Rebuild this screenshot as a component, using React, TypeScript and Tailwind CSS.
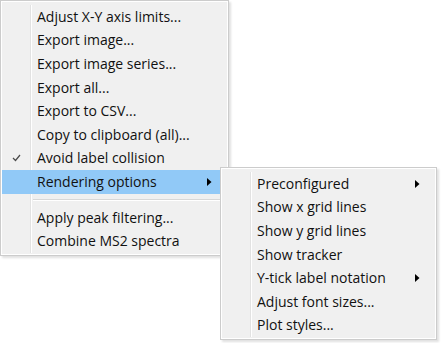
import React from 'react'

type Item = { label: string; checked?: boolean; sub?: boolean; active?: boolean } | 'sep'

const mainItems: Item[] = [
  { label: 'Adjust X-Y axis limits...' },
  { label: 'Export image...' },
  { label: 'Export image series...' },
  { label: 'Export all...' },
  { label: 'Export to CSV...' },
  { label: 'Copy to clipboard (all)...' },
  { label: 'Avoid label collision', checked: true },
  { label: 'Rendering options', sub: true, active: true },
  'sep',
  { label: 'Apply peak filtering...' },
  { label: 'Combine MS2 spectra' },
]

const renderItems: Item[] = [
  { label: 'Preconfigured', sub: true },
  { label: 'Show x grid lines' },
  { label: 'Show y grid lines' },
  { label: 'Show tracker' },
  { label: 'Y-tick label notation', sub: true },
  { label: 'Adjust font sizes...' },
  { label: 'Plot styles...' },
]

function Check() {
  return (
    <svg width="9" height="8" viewBox="0 0 9 8" fill="none" stroke="#4a4a4a" strokeWidth="1.2">
      <polyline points="1,4 3.5,6.5 8,1" />
    </svg>
  )
}

function Arrow() {
  return (
    <svg width="5" height="8" viewBox="0 0 5 8" fill="#000">
      <polygon points="0,0 4.5,4 0,8" />
    </svg>
  )
}

function MenuRow({ item }: { item: Item }) {
  if (item === 'sep') {
    return (
      <div className="flex h-[12px]">
        <div className="w-[28px] shrink-0" />
        <div className="flex-1 border-l border-[#e2e2e2] shadow-[inset_1px_0_0_#fff] pl-[2px] pt-[5px]">
          <div className="h-px bg-[#d7d7d7]" />
          <div className="h-px bg-white" />
        </div>
      </div>
    )
  }
  return (
    <div className={`flex h-[23.6px] items-center ${item.active ? 'bg-[#91c9f7]' : ''}`}>
      <div className="flex w-[28px] shrink-0 items-center justify-center pl-[1px]">
        {item.checked && <Check />}
      </div>
      <div
        className={`flex h-full flex-1 items-center justify-between pl-[6px] pr-[15px] ${
          item.active ? 'border-l border-transparent' : 'border-l border-[#e2e2e2] shadow-[inset_1px_0_0_#fff]'
        }`}
      >
        <span className="whitespace-nowrap">{item.label}</span>
        {item.sub && <Arrow />}
      </div>
    </div>
  )
}

function Menu({ items, className }: { items: Item[]; className?: string }) {
  return (
    <div className={`border border-[#cccccc] bg-white p-px shadow-[2px_2px_2px_rgba(0,0,0,0.12)] ${className ?? ''}`}>
      <div className="bg-[#f0f0f0] pt-[3px] pb-[1px]">
        {items.map((it, i) => (
          <MenuRow key={i} item={it} />
        ))}
      </div>
    </div>
  )
}

export default function App() {
  return (
    <div
      className="relative h-[343px] w-[443px] overflow-hidden bg-white text-[14px] leading-none text-[#111]"
      style={{ fontFamily: '"Open Sans", "Noto Sans", sans-serif' }}
    >
      <Menu items={mainItems} className="w-[229px]" />
      {/* submenu overlays the main menu */}
      <Menu items={renderItems} className="absolute left-[220px] top-[167px] w-[217px]" />
    </div>
  )
}
